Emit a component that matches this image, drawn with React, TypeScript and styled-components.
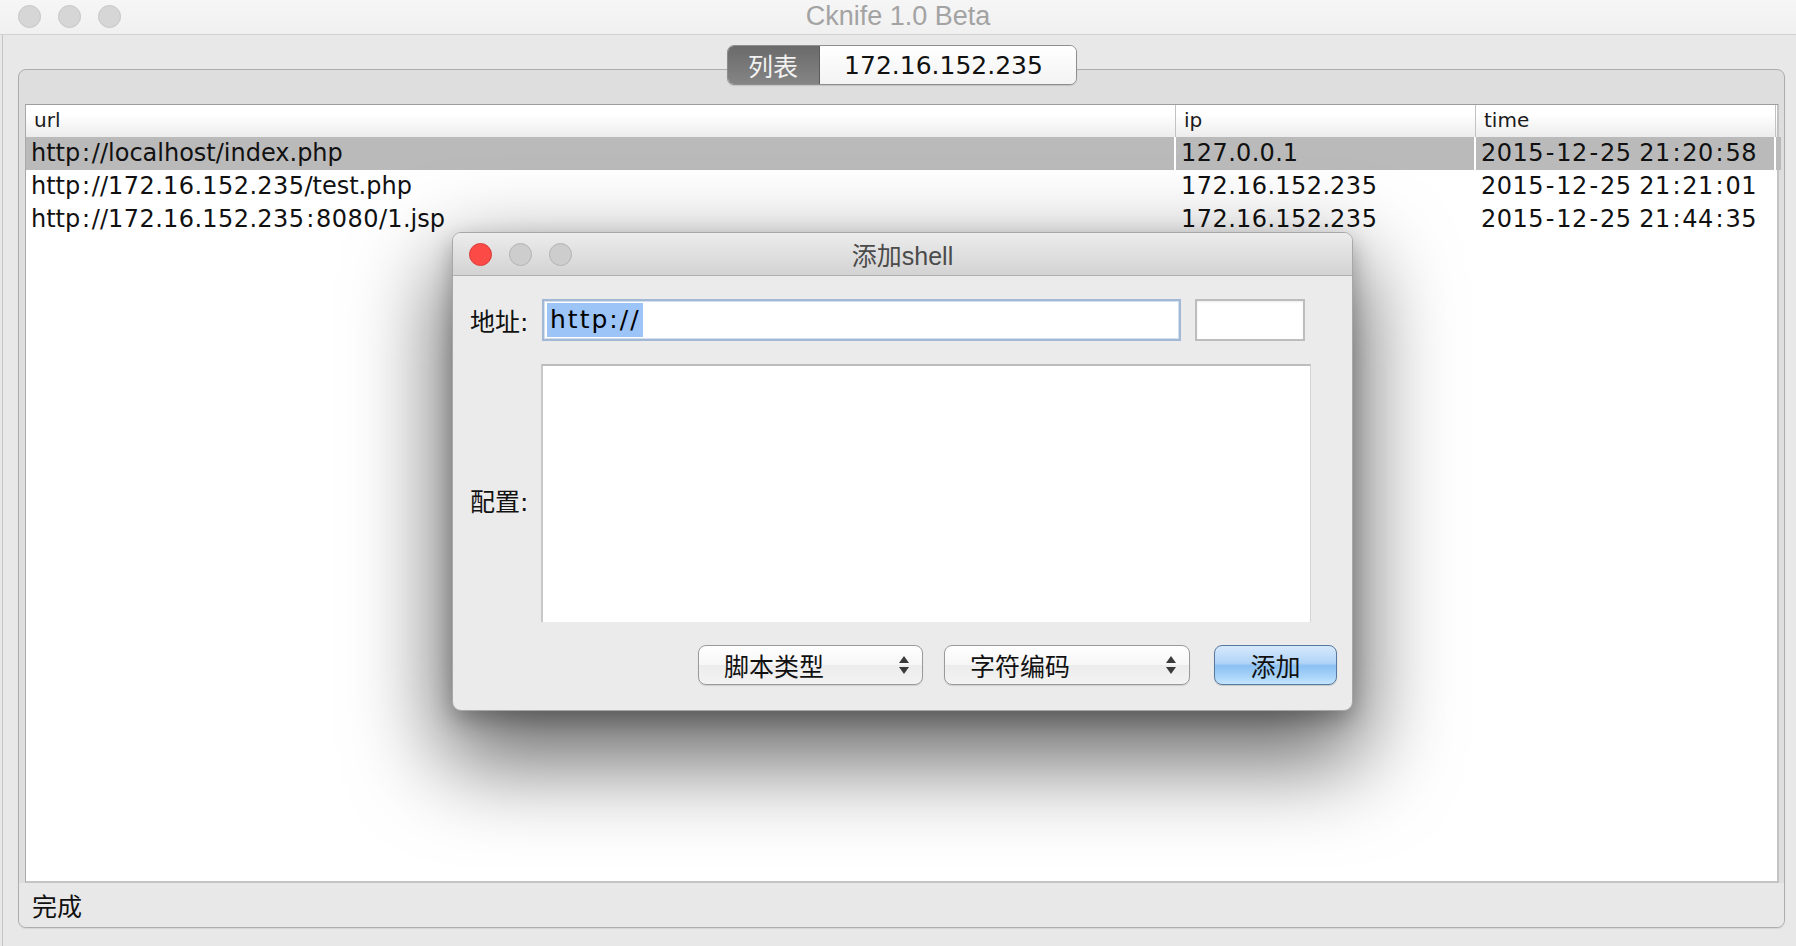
import React from "react";
import styled, { createGlobalStyle } from "styled-components";

const Global = createGlobalStyle`
  html, body { margin: 0; padding: 0; background: #e8e8e8; }
  body { width: 1796px; height: 946px; overflow: hidden; font-family: "DejaVu Sans", "Noto Sans CJK SC", sans-serif; }
  * { box-sizing: border-box; }
`;

const Root = styled.div`
  position: relative;
  width: 1796px;
  height: 946px;
  display: flex;
  flex-direction: column;
  background: #e8e8e8;
  color: #111;
`;

const TitleBar = styled.div`
  height: 35px;
  flex: none;
  display: grid;
  grid-template-columns: 1fr auto 1fr;
  align-items: center;
  padding: 0 18px 2px 18px;
  background: linear-gradient(#f6f6f6, #f0f0f0);
  border-bottom: 1px solid #d2d2d2;
`;

const Lights = styled.div<{ $gap: number }>`
  display: flex;
  align-items: center;
  gap: ${(p) => p.$gap}px;
`;

const Light = styled.span<{ $fill: string; $edge: string }>`
  width: 23px;
  height: 23px;
  border-radius: 50%;
  background: ${(p) => p.$fill};
  border: 1px solid ${(p) => p.$edge};
`;

const WindowTitle = styled.div`
  font-family: "Liberation Sans", Arial, sans-serif;
  font-size: 27px;
  color: #a3a3a3;
  line-height: 30px;
`;

const Body = styled.div`
  flex: 1;
  display: flex;
  flex-direction: column;
  margin-left: 2px;
  border-left: 1px solid #c4c4c4;
  padding: 10px 11px 18px 15px;
`;

const TabsRow = styled.div`
  position: relative;
  z-index: 1;
  display: flex;
  justify-content: center;
  height: 40px;
  margin-bottom: -16px;
`;

const Segmented = styled.div`
  display: flex;
  border: 1px solid #8e8e8e;
  border-radius: 7px;
  overflow: hidden;
  box-shadow: 0 1px 1px rgba(0, 0, 0, 0.12);
`;

const Segment = styled.div<{ $active?: boolean; $w: number; $shift?: number }>`
  width: ${(p) => p.$w}px;
  display: flex;
  align-items: center;
  justify-content: center;
  padding-right: ${(p) => p.$shift ?? 0}px;
  font-size: 25px;
  color: ${(p) => (p.$active ? "#f2f2f2" : "#111")};
  background: ${(p) =>
    p.$active
      ? "linear-gradient(#6a6a6a, #858585)"
      : "linear-gradient(#ffffff, #f3f3f3)"};
  & + & {
    border-left: 1px solid #5c5c5c;
  }
`;

const Pane = styled.div`
  flex: 1;
  display: flex;
  flex-direction: column;
  border: 1px solid #adadad;
  border-radius: 8px;
  background: #dedede;
  padding: 34px 5px 0 6px;
  overflow: hidden;
  box-shadow: 0 1px 1px rgba(0, 0, 0, 0.08);
`;

const Table = styled.div`
  flex: 1;
  background: #fff;
  border-top: 1px solid #9d9d9d;
  border-left: 1px solid #a9a9a9;
  border-right: 2px solid #c2c2c2;
  border-bottom: 2px solid #c4c4c4;
`;

const cols = "1150px 300px 300px 1fr";

const HeaderRow = styled.div`
  display: grid;
  grid-template-columns: ${cols};
  height: 32px;
  background: linear-gradient(#ffffff 30%, #ececec);
`;

const HeaderCell = styled.div`
  font-size: 20px;
  line-height: 30px;
  padding: 0 0 0 8px;
  color: #1a1a1a;
  border-right: 1px solid #c2c2c2;
  &:last-child {
    border-right: none;
  }
`;

const Row = styled.div`
  display: grid;
  grid-template-columns: ${cols};
  height: 33px;
`;

const Cell = styled.div<{ $sel?: boolean }>`
  font-size: 24px;
  line-height: 33px;
  padding-left: 5px;
  white-space: nowrap;
  color: #111;
  background: ${(p) => (p.$sel ? "#bababa" : "transparent")};
  border-right: 2px solid #fff;
  &:last-child {
    border-right: none;
  }
`;

const Digits = styled.span`
  letter-spacing: 0.5px;
`;

const Punct = styled.span`
  margin: 0 1.75px;
`;

const Status = styled.div`
  height: 44px;
  margin: 0 -5px 0 -6px;
  padding-left: 13px;
  display: flex;
  align-items: center;
  font-size: 25px;
  background: #e8e8e8;
`;

/* dialog */

const Dialog = styled.div`
  position: absolute;
  left: 452px;
  top: 232px;
  width: 901px;
  height: 479px;
  display: flex;
  flex-direction: column;
  background: #ebebeb;
  border: 1px solid #a7a7a7;
  border-radius: 9px;
  box-shadow: 0 40px 90px 10px rgba(0, 0, 0, 0.6), 0 8px 22px rgba(0, 0, 0, 0.25);
`;

const DialogBar = styled.div`
  height: 43px;
  flex: none;
  display: grid;
  grid-template-columns: 1fr auto 1fr;
  align-items: center;
  padding: 0 16px;
  background: linear-gradient(#ececec, #d3d3d3);
  border-bottom: 1px solid #afafaf;
  border-radius: 8px 8px 0 0;
`;

const DialogTitle = styled.div`
  font-family: "Liberation Sans", "Noto Sans CJK SC", sans-serif;
  font-size: 25px;
  color: #4b4b4b;
`;

const DialogBody = styled.div`
  flex: 1;
  display: grid;
  grid-template-columns: 72px 1fr;
  grid-template-rows: 42px 258px 40px;
  row-gap: 23px;
  padding: 23px 15px 25px 17px;
`;

const Label = styled.div<{ $drop?: number }>`
  font-size: 25px;
  align-self: center;
  padding-top: ${(p) => p.$drop ?? 0}px;
  color: #111;
`;

const FieldRow = styled.div`
  display: flex;
  gap: 14px;
`;

const AddrField = styled.div`
  width: 639px;
  height: 42px;
  background: #fff;
  border: 2px solid #a3b8d4;
  box-shadow: inset 0 0 0 1px #d3deec;
  padding: 2px 3px;
  display: flex;
  align-items: stretch;
`;

const Selected = styled.span`
  background: #9cc4f7;
  font-size: 25px;
  letter-spacing: 2px;
  line-height: 34px;
  padding: 0 2px 0 3px;
  color: #000;
`;

const SmallField = styled.div`
  width: 110px;
  height: 42px;
  background: #fff;
  border: 2px solid #bdbdbd;
  box-shadow: inset 0 1px 2px rgba(0, 0, 0, 0.08);
`;

const TextArea = styled.div`
  width: 770px;
  height: 258px;
  margin-left: -1px;
  background: #fff;
  border-top: 2px solid #bcbcbc;
  border-left: 2px solid #c8c8c8;
  border-right: 1px solid #d4d4d4;
`;

const Footer = styled.div`
  grid-column: 1 / -1;
  display: flex;
  justify-content: flex-end;
  align-items: center;
  gap: 21px;
`;

const Select = styled.div<{ $w: number }>`
  width: ${(p) => p.$w}px;
  height: 40px;
  display: flex;
  align-items: center;
  justify-content: space-between;
  padding: 0 12px 0 25px;
  font-size: 25px;
  color: #111;
  background: linear-gradient(#ffffff, #f6f6f6 50%, #ececec 51%, #f3f3f3);
  border: 1px solid #9a9a9a;
  border-radius: 8px;
  box-shadow: 0 1px 1px rgba(0, 0, 0, 0.12);
`;

const AddButton = styled.div`
  width: 123px;
  height: 40px;
  margin-left: 3px;
  display: flex;
  align-items: center;
  justify-content: center;
  font-size: 25px;
  color: #111;
  background: linear-gradient(#d6e9fc, #b1d4f7 45%, #8cc1f3 52%, #a8d4fa 80%, #c4e4fd);
  border: 1px solid #58799f;
  border-radius: 8px;
  box-shadow: 0 1px 1px rgba(0, 0, 0, 0.15);
`;

const Arrows = () => (
  <svg width="12" height="22" viewBox="0 0 12 22">
    <path d="M6 2 L11 9 H1 Z" fill="#3a3a3a" />
    <path d="M6 20 L11 13 H1 Z" fill="#3a3a3a" />
  </svg>
);

const Spaced = ({ text }: { text: string }) => (
  <>
    {text.split(/(\d+|[:\-])/).map((part, i) => {
      if (!part) return null;
      if (/^\d+$/.test(part)) return <Digits key={i}>{part}</Digits>;
      if (part === ":" || part === "-") return <Punct key={i}>{part}</Punct>;
      return <React.Fragment key={i}>{part}</React.Fragment>;
    })}
  </>
);

const rows = [
  ["http://localhost/index.php", "127.0.0.1", "2015-12-25 21:20:58"],
  ["http://172.16.152.235/test.php", "172.16.152.235", "2015-12-25 21:21:01"],
  ["http://172.16.152.235:8080/1.jsp", "172.16.152.235", "2015-12-25 21:44:35"],
];

export default function App() {
  return (
    <Root>
      <Global />
      <TitleBar>
        <Lights $gap={17}>
          <Light $fill="#d6d6d6" $edge="#c6c6c6" />
          <Light $fill="#d6d6d6" $edge="#c6c6c6" />
          <Light $fill="#d6d6d6" $edge="#c6c6c6" />
        </Lights>
        <WindowTitle>Cknife 1.0 Beta</WindowTitle>
        <div />
      </TitleBar>
      <Body>
        <TabsRow>
          <Segmented>
            <Segment $active $w={91}>列表</Segment>
            <Segment $w={257} $shift={8}>172.16.152.235</Segment>
          </Segmented>
        </TabsRow>
        <Pane>
          <Table>
            <HeaderRow>
              <HeaderCell>url</HeaderCell>
              <HeaderCell>ip</HeaderCell>
              <HeaderCell>time</HeaderCell>
              <HeaderCell />
            </HeaderRow>
            {rows.map((r, i) => (
              <Row key={i}>
                {r.map((c, j) => (
                  <Cell key={j} $sel={i === 0}>
                    <Spaced text={c} />
                  </Cell>
                ))}
                <Cell $sel={i === 0} />
              </Row>
            ))}
          </Table>
          <Status>完成</Status>
        </Pane>
      </Body>

      <Dialog>
        <DialogBar>
          <Lights $gap={17}>
            <Light $fill="#fc4b47" $edge="#dc3b37" />
            <Light $fill="#cdcdcd" $edge="#b3b3b3" />
            <Light $fill="#cdcdcd" $edge="#b3b3b3" />
          </Lights>
          <DialogTitle>添加shell</DialogTitle>
          <div />
        </DialogBar>
        <DialogBody>
          <Label>地址:</Label>
          <FieldRow>
            <AddrField>
              <Selected>http://</Selected>
            </AddrField>
            <SmallField />
          </FieldRow>
          <Label $drop={14}>配置:</Label>
          <TextArea />
          <Footer>
            <Select $w={225}>
              脚本类型
              <Arrows />
            </Select>
            <Select $w={246}>
              字符编码
              <Arrows />
            </Select>
            <AddButton>添加</AddButton>
          </Footer>
        </DialogBody>
      </Dialog>
    </Root>
  );
}
